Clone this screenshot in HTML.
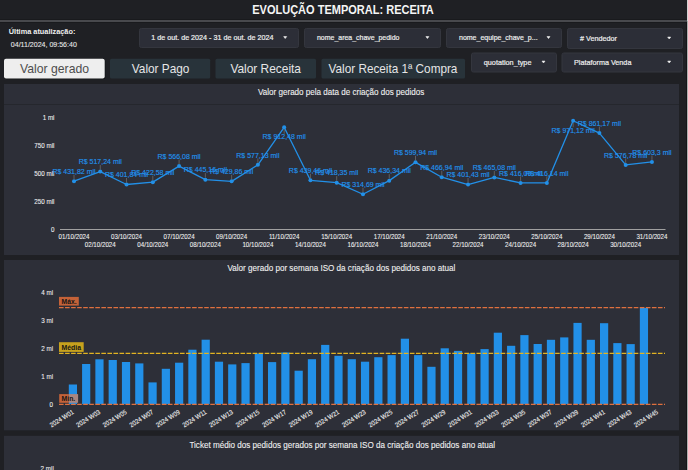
<!DOCTYPE html><html><head><meta charset="utf-8"><style>
html,body{margin:0;padding:0;background:#1f2024;width:688px;height:470px;overflow:hidden;font-family:'Liberation Sans',sans-serif}
</style></head><body>
<svg width="688" height="470" viewBox="0 0 688 470" font-family="'Liberation Sans',sans-serif" style="position:absolute;left:0;top:0">
<rect width="688" height="470" fill="#1f2024"/>
<rect x="0" y="19.2" width="687" height="3.6" fill="#18191c"/>
<rect x="0" y="20" width="687" height="2" fill="#48494d"/>
<rect x="686" y="22" width="1" height="448" fill="#151618"/>
<rect x="687" y="0" width="1" height="21" fill="#d4d4d4"/>
<rect x="687" y="21" width="1" height="449" fill="#b0b0b0"/>
<rect x="139.5" y="28.5" width="159" height="19" rx="1.8" fill="#2c2e37" stroke="#34363e" stroke-width="1"/>
<path d="M283.7,36.6 L286.7,36.6 L285.2,38.5 Z" fill="#f0f0f0" stroke="#f0f0f0" stroke-width="0.6" stroke-linejoin="round"/>
<rect x="304.5" y="28.5" width="136" height="19" rx="1.8" fill="#2c2e37" stroke="#34363e" stroke-width="1"/>
<path d="M425.9,36.6 L428.9,36.6 L427.4,38.5 Z" fill="#f0f0f0" stroke="#f0f0f0" stroke-width="0.6" stroke-linejoin="round"/>
<rect x="446.5" y="28.5" width="115" height="19" rx="1.8" fill="#2c2e37" stroke="#34363e" stroke-width="1"/>
<path d="M547.0,36.6 L550.0,36.6 L548.5,38.5 Z" fill="#f0f0f0" stroke="#f0f0f0" stroke-width="0.6" stroke-linejoin="round"/>
<rect x="567.5" y="28.5" width="115" height="20" rx="1.8" fill="#2c2e37" stroke="#34363e" stroke-width="1"/>
<path d="M667.7,37.1 L670.7,37.1 L669.2,39.0 Z" fill="#f0f0f0" stroke="#f0f0f0" stroke-width="0.6" stroke-linejoin="round"/>
<rect x="471.5" y="53.0" width="85" height="19.0" rx="1.8" fill="#2c2e37" stroke="#34363e" stroke-width="1"/>
<path d="M542.0,61.1 L545.0,61.1 L543.5,63.0 Z" fill="#f0f0f0" stroke="#f0f0f0" stroke-width="0.6" stroke-linejoin="round"/>
<rect x="562.0" y="53.0" width="120.5" height="19.0" rx="1.8" fill="#2c2e37" stroke="#34363e" stroke-width="1"/>
<path d="M667.7,61.1 L670.7,61.1 L669.2,63.0 Z" fill="#f0f0f0" stroke="#f0f0f0" stroke-width="0.6" stroke-linejoin="round"/>
<rect x="4.3" y="59.3" width="101.10000000000001" height="20" rx="2" fill="#131417"/>
<rect x="4" y="58.8" width="100.7" height="19.8" rx="2" fill="#eeeeee"/>
<rect x="110" y="58.8" width="100.19999999999999" height="19.8" rx="1.5" fill="#28333a"/>
<rect x="215.5" y="58.8" width="100.5" height="19.8" rx="1.5" fill="#28333a"/>
<rect x="321.5" y="58.8" width="143.5" height="19.8" rx="1.5" fill="#28333a"/>
<rect x="4" y="84" width="675" height="171" fill="#2d2f38"/>
<rect x="4" y="104" width="675" height="1" fill="#25272d"/>
<rect x="4" y="260" width="675" height="170.3" fill="#2d2f38"/>
<rect x="4" y="435.8" width="675" height="40" fill="#2d2f38"/>
<text x="252.20" y="13.8" font-size="12" font-weight="700" fill="#f5f5f5" textLength="181.60" lengthAdjust="spacingAndGlyphs">EVOLUÇÃO TEMPORAL: RECEITA</text>
<text x="8.80" y="34.0" font-size="7" font-weight="700" fill="#eeeeee" textLength="66.61" lengthAdjust="spacingAndGlyphs">Última atualização:</text>
<text x="10.80" y="47.1" font-size="8" font-weight="400" fill="#e8e8e8" stroke="#e8e8e8" stroke-width="0.1" textLength="66.01" lengthAdjust="spacingAndGlyphs">04/11/2024, 09:56:40</text>
<text x="151.20" y="40.4" font-size="7.6" font-weight="400" fill="#eeeeee" stroke="#eeeeee" stroke-width="0.2" textLength="122.20" lengthAdjust="spacingAndGlyphs">1 de out. de 2024 - 31 de out. de 2024</text>
<text x="317.00" y="40.4" font-size="7.6" font-weight="400" fill="#eeeeee" stroke="#eeeeee" stroke-width="0.2" textLength="82.40" lengthAdjust="spacingAndGlyphs">nome_area_chave_pedido</text>
<text x="459.00" y="40.4" font-size="7.6" font-weight="400" fill="#eeeeee" stroke="#eeeeee" stroke-width="0.2" textLength="78.60" lengthAdjust="spacingAndGlyphs">nome_equipe_chave_p...</text>
<text x="580.00" y="40.5" font-size="7.6" font-weight="400" fill="#eeeeee" stroke="#eeeeee" stroke-width="0.2" textLength="37.00" lengthAdjust="spacingAndGlyphs"># Vendedor</text>
<text x="483.80" y="64.6" font-size="7.6" font-weight="400" fill="#eeeeee" stroke="#eeeeee" stroke-width="0.2" textLength="47.62" lengthAdjust="spacingAndGlyphs">quotation_type</text>
<text x="574.00" y="64.7" font-size="7.6" font-weight="400" fill="#eeeeee" stroke="#eeeeee" stroke-width="0.2" textLength="57.41" lengthAdjust="spacingAndGlyphs">Plataforma Venda</text>
<text x="20.00" y="73.0" font-size="13.5" font-weight="400" fill="#4d4d4d" textLength="69.01" lengthAdjust="spacingAndGlyphs">Valor gerado</text>
<text x="131.80" y="73.0" font-size="13.5" font-weight="400" fill="#e6e6e6" textLength="57.61" lengthAdjust="spacingAndGlyphs">Valor Pago</text>
<text x="230.40" y="72.8" font-size="13.5" font-weight="400" fill="#e6e6e6" textLength="70.61" lengthAdjust="spacingAndGlyphs">Valor Receita</text>
<text x="328.60" y="73.0" font-size="13.5" font-weight="400" fill="#e6e6e6" textLength="128.80" lengthAdjust="spacingAndGlyphs">Valor Receita 1ª Compra</text>
<text x="258.00" y="94.9" font-size="8.8" font-weight="400" fill="#f0f0f0" stroke="#f0f0f0" stroke-width="0.1" textLength="166.20" lengthAdjust="spacingAndGlyphs">Valor gerado pela data de criação dos pedidos</text>
<text x="227.40" y="271.2" font-size="8.8" font-weight="400" fill="#f0f0f0" stroke="#f0f0f0" stroke-width="0.1" textLength="228.00" lengthAdjust="spacingAndGlyphs">Valor gerado por semana ISO da criação dos pedidos ano atual</text>
<text x="189.40" y="447.5" font-size="8.8" font-weight="400" fill="#f0f0f0" stroke="#f0f0f0" stroke-width="0.1" textLength="305.60" lengthAdjust="spacingAndGlyphs">Ticket médio dos pedidos gerados por semana ISO da criação dos pedidos ano atual</text>
<text x="54.5" y="120" text-anchor="end" font-size="6.7" fill="#f0f0f0" stroke="#f0f0f0" stroke-width="0.08" textLength="11.81" lengthAdjust="spacingAndGlyphs">1 mi</text>
<text x="54.5" y="148" text-anchor="end" font-size="6.7" fill="#f0f0f0" stroke="#f0f0f0" stroke-width="0.08" textLength="20.15" lengthAdjust="spacingAndGlyphs">750 mil</text>
<text x="54.5" y="176" text-anchor="end" font-size="6.7" fill="#f0f0f0" stroke="#f0f0f0" stroke-width="0.08" textLength="20.15" lengthAdjust="spacingAndGlyphs">500 mil</text>
<text x="54.5" y="204" text-anchor="end" font-size="6.7" fill="#f0f0f0" stroke="#f0f0f0" stroke-width="0.08" textLength="20.15" lengthAdjust="spacingAndGlyphs">250 mil</text>
<text x="54.5" y="232" text-anchor="end" font-size="6.7" fill="#f0f0f0" stroke="#f0f0f0" stroke-width="0.08" textLength="3.48" lengthAdjust="spacingAndGlyphs">0</text>
<line x1="60" y1="229.5" x2="665.5" y2="229.5" stroke="#a0a0a0" stroke-width="1"/>
<text x="74.00" y="238.7" text-anchor="middle" font-size="6.7" fill="#f0f0f0" stroke="#f0f0f0" stroke-width="0.08" textLength="31.03" lengthAdjust="spacingAndGlyphs">01/10/2024</text>
<text x="100.27" y="246.6" text-anchor="middle" font-size="6.7" fill="#f0f0f0" stroke="#f0f0f0" stroke-width="0.08" textLength="31.03" lengthAdjust="spacingAndGlyphs">02/10/2024</text>
<text x="126.54" y="238.7" text-anchor="middle" font-size="6.7" fill="#f0f0f0" stroke="#f0f0f0" stroke-width="0.08" textLength="31.03" lengthAdjust="spacingAndGlyphs">03/10/2024</text>
<text x="152.81" y="246.6" text-anchor="middle" font-size="6.7" fill="#f0f0f0" stroke="#f0f0f0" stroke-width="0.08" textLength="31.03" lengthAdjust="spacingAndGlyphs">04/10/2024</text>
<text x="179.08" y="238.7" text-anchor="middle" font-size="6.7" fill="#f0f0f0" stroke="#f0f0f0" stroke-width="0.08" textLength="31.03" lengthAdjust="spacingAndGlyphs">07/10/2024</text>
<text x="205.35" y="246.6" text-anchor="middle" font-size="6.7" fill="#f0f0f0" stroke="#f0f0f0" stroke-width="0.08" textLength="31.03" lengthAdjust="spacingAndGlyphs">08/10/2024</text>
<text x="231.62" y="238.7" text-anchor="middle" font-size="6.7" fill="#f0f0f0" stroke="#f0f0f0" stroke-width="0.08" textLength="31.03" lengthAdjust="spacingAndGlyphs">09/10/2024</text>
<text x="257.89" y="246.6" text-anchor="middle" font-size="6.7" fill="#f0f0f0" stroke="#f0f0f0" stroke-width="0.08" textLength="31.03" lengthAdjust="spacingAndGlyphs">10/10/2024</text>
<text x="284.16" y="238.7" text-anchor="middle" font-size="6.7" fill="#f0f0f0" stroke="#f0f0f0" stroke-width="0.08" textLength="30.57" lengthAdjust="spacingAndGlyphs">11/10/2024</text>
<text x="310.43" y="246.6" text-anchor="middle" font-size="6.7" fill="#f0f0f0" stroke="#f0f0f0" stroke-width="0.08" textLength="31.03" lengthAdjust="spacingAndGlyphs">14/10/2024</text>
<text x="336.70" y="238.7" text-anchor="middle" font-size="6.7" fill="#f0f0f0" stroke="#f0f0f0" stroke-width="0.08" textLength="31.03" lengthAdjust="spacingAndGlyphs">15/10/2024</text>
<text x="362.97" y="246.6" text-anchor="middle" font-size="6.7" fill="#f0f0f0" stroke="#f0f0f0" stroke-width="0.08" textLength="31.03" lengthAdjust="spacingAndGlyphs">16/10/2024</text>
<text x="389.24" y="238.7" text-anchor="middle" font-size="6.7" fill="#f0f0f0" stroke="#f0f0f0" stroke-width="0.08" textLength="31.03" lengthAdjust="spacingAndGlyphs">17/10/2024</text>
<text x="415.51" y="246.6" text-anchor="middle" font-size="6.7" fill="#f0f0f0" stroke="#f0f0f0" stroke-width="0.08" textLength="31.03" lengthAdjust="spacingAndGlyphs">18/10/2024</text>
<text x="441.78" y="238.7" text-anchor="middle" font-size="6.7" fill="#f0f0f0" stroke="#f0f0f0" stroke-width="0.08" textLength="31.03" lengthAdjust="spacingAndGlyphs">21/10/2024</text>
<text x="468.05" y="246.6" text-anchor="middle" font-size="6.7" fill="#f0f0f0" stroke="#f0f0f0" stroke-width="0.08" textLength="31.03" lengthAdjust="spacingAndGlyphs">22/10/2024</text>
<text x="494.32" y="238.7" text-anchor="middle" font-size="6.7" fill="#f0f0f0" stroke="#f0f0f0" stroke-width="0.08" textLength="31.03" lengthAdjust="spacingAndGlyphs">23/10/2024</text>
<text x="520.59" y="246.6" text-anchor="middle" font-size="6.7" fill="#f0f0f0" stroke="#f0f0f0" stroke-width="0.08" textLength="31.03" lengthAdjust="spacingAndGlyphs">24/10/2024</text>
<text x="546.86" y="238.7" text-anchor="middle" font-size="6.7" fill="#f0f0f0" stroke="#f0f0f0" stroke-width="0.08" textLength="31.03" lengthAdjust="spacingAndGlyphs">25/10/2024</text>
<text x="573.13" y="246.6" text-anchor="middle" font-size="6.7" fill="#f0f0f0" stroke="#f0f0f0" stroke-width="0.08" textLength="31.03" lengthAdjust="spacingAndGlyphs">28/10/2024</text>
<text x="599.40" y="238.7" text-anchor="middle" font-size="6.7" fill="#f0f0f0" stroke="#f0f0f0" stroke-width="0.08" textLength="31.03" lengthAdjust="spacingAndGlyphs">29/10/2024</text>
<text x="625.67" y="246.6" text-anchor="middle" font-size="6.7" fill="#f0f0f0" stroke="#f0f0f0" stroke-width="0.08" textLength="31.03" lengthAdjust="spacingAndGlyphs">30/10/2024</text>
<text x="651.94" y="238.7" text-anchor="middle" font-size="6.7" fill="#f0f0f0" stroke="#f0f0f0" stroke-width="0.08" textLength="31.03" lengthAdjust="spacingAndGlyphs">31/10/2024</text>
<polyline points="74.00,181.14 100.27,171.57 126.54,184.49 152.81,182.17 179.08,166.10 205.35,179.64 231.62,181.36 257.89,164.86 284.16,127.30 310.43,180.28 336.70,182.64 362.97,194.25 389.24,180.63 415.51,162.31 441.78,177.20 468.05,184.54 494.32,177.41 520.59,182.90 546.86,182.89 573.13,120.73 599.40,133.05 625.67,164.90 651.94,161.93" fill="none" stroke="#2290e8" stroke-width="1.3" stroke-linejoin="round"/>
<circle cx="74.00" cy="181.14" r="2" fill="#2290e8"/>
<circle cx="100.27" cy="171.57" r="2" fill="#2290e8"/>
<circle cx="126.54" cy="184.49" r="2" fill="#2290e8"/>
<circle cx="152.81" cy="182.17" r="2" fill="#2290e8"/>
<circle cx="179.08" cy="166.10" r="2" fill="#2290e8"/>
<circle cx="205.35" cy="179.64" r="2" fill="#2290e8"/>
<circle cx="231.62" cy="181.36" r="2" fill="#2290e8"/>
<circle cx="257.89" cy="164.86" r="2" fill="#2290e8"/>
<circle cx="284.16" cy="127.30" r="2" fill="#2290e8"/>
<circle cx="310.43" cy="180.28" r="2" fill="#2290e8"/>
<circle cx="336.70" cy="182.64" r="2" fill="#2290e8"/>
<circle cx="362.97" cy="194.25" r="2" fill="#2290e8"/>
<circle cx="389.24" cy="180.63" r="2" fill="#2290e8"/>
<circle cx="415.51" cy="162.31" r="2" fill="#2290e8"/>
<circle cx="441.78" cy="177.20" r="2" fill="#2290e8"/>
<circle cx="468.05" cy="184.54" r="2" fill="#2290e8"/>
<circle cx="494.32" cy="177.41" r="2" fill="#2290e8"/>
<circle cx="520.59" cy="182.90" r="2" fill="#2290e8"/>
<circle cx="546.86" cy="182.89" r="2" fill="#2290e8"/>
<circle cx="573.13" cy="120.73" r="2" fill="#2290e8"/>
<circle cx="599.40" cy="133.05" r="2" fill="#2290e8"/>
<circle cx="625.67" cy="164.90" r="2" fill="#2290e8"/>
<circle cx="651.94" cy="161.93" r="2" fill="#2290e8"/>
<line x1="74.00" y1="179.14" x2="74.00" y2="174.64" stroke="#707070" stroke-width="0.75"/>
<text x="74.00" y="173.84" text-anchor="middle" font-size="7.9" fill="#2193ee" stroke="#2193ee" stroke-width="0.15" textLength="43.19" lengthAdjust="spacingAndGlyphs">R$ 431,82 mil</text>
<line x1="100.27" y1="169.57" x2="100.27" y2="165.07" stroke="#707070" stroke-width="0.75"/>
<text x="100.27" y="164.27" text-anchor="middle" font-size="7.9" fill="#2193ee" stroke="#2193ee" stroke-width="0.15" textLength="43.19" lengthAdjust="spacingAndGlyphs">R$ 517,24 mil</text>
<line x1="126.54" y1="182.49" x2="126.54" y2="177.99" stroke="#707070" stroke-width="0.75"/>
<text x="126.54" y="177.19" text-anchor="middle" font-size="7.9" fill="#2193ee" stroke="#2193ee" stroke-width="0.15" textLength="43.19" lengthAdjust="spacingAndGlyphs">R$ 401,84 mil</text>
<line x1="152.81" y1="180.17" x2="152.81" y2="175.67" stroke="#707070" stroke-width="0.75"/>
<text x="152.81" y="174.87" text-anchor="middle" font-size="7.9" fill="#2193ee" stroke="#2193ee" stroke-width="0.15" textLength="43.19" lengthAdjust="spacingAndGlyphs">R$ 422,58 mil</text>
<line x1="179.08" y1="164.10" x2="179.08" y2="159.60" stroke="#707070" stroke-width="0.75"/>
<text x="179.08" y="158.80" text-anchor="middle" font-size="7.9" fill="#2193ee" stroke="#2193ee" stroke-width="0.15" textLength="43.19" lengthAdjust="spacingAndGlyphs">R$ 566,08 mil</text>
<line x1="205.35" y1="177.64" x2="205.35" y2="173.14" stroke="#707070" stroke-width="0.75"/>
<text x="205.35" y="172.34" text-anchor="middle" font-size="7.9" fill="#2193ee" stroke="#2193ee" stroke-width="0.15" textLength="43.19" lengthAdjust="spacingAndGlyphs">R$ 445,16 mil</text>
<line x1="231.62" y1="179.36" x2="231.62" y2="174.86" stroke="#707070" stroke-width="0.75"/>
<text x="231.62" y="174.06" text-anchor="middle" font-size="7.9" fill="#2193ee" stroke="#2193ee" stroke-width="0.15" textLength="43.19" lengthAdjust="spacingAndGlyphs">R$ 429,86 mil</text>
<line x1="257.89" y1="162.86" x2="257.89" y2="158.36" stroke="#707070" stroke-width="0.75"/>
<text x="257.89" y="157.56" text-anchor="middle" font-size="7.9" fill="#2193ee" stroke="#2193ee" stroke-width="0.15" textLength="43.19" lengthAdjust="spacingAndGlyphs">R$ 577,13 mil</text>
<line x1="284.16" y1="129.30" x2="284.16" y2="133.80" stroke="#707070" stroke-width="0.75"/>
<text x="284.16" y="139.30" text-anchor="middle" font-size="7.9" fill="#2193ee" stroke="#2193ee" stroke-width="0.15" textLength="43.19" lengthAdjust="spacingAndGlyphs">R$ 912,48 mil</text>
<line x1="310.43" y1="178.28" x2="310.43" y2="173.78" stroke="#707070" stroke-width="0.75"/>
<text x="310.43" y="172.98" text-anchor="middle" font-size="7.9" fill="#2193ee" stroke="#2193ee" stroke-width="0.15" textLength="43.19" lengthAdjust="spacingAndGlyphs">R$ 439,46 mil</text>
<line x1="336.70" y1="180.64" x2="336.70" y2="176.14" stroke="#707070" stroke-width="0.75"/>
<text x="336.70" y="175.34" text-anchor="middle" font-size="7.9" fill="#2193ee" stroke="#2193ee" stroke-width="0.15" textLength="43.19" lengthAdjust="spacingAndGlyphs">R$ 418,35 mil</text>
<line x1="362.97" y1="192.25" x2="362.97" y2="187.75" stroke="#707070" stroke-width="0.75"/>
<text x="362.97" y="186.95" text-anchor="middle" font-size="7.9" fill="#2193ee" stroke="#2193ee" stroke-width="0.15" textLength="43.19" lengthAdjust="spacingAndGlyphs">R$ 314,69 mil</text>
<line x1="389.24" y1="178.63" x2="389.24" y2="174.13" stroke="#707070" stroke-width="0.75"/>
<text x="389.24" y="173.33" text-anchor="middle" font-size="7.9" fill="#2193ee" stroke="#2193ee" stroke-width="0.15" textLength="43.19" lengthAdjust="spacingAndGlyphs">R$ 436,34 mil</text>
<line x1="415.51" y1="160.31" x2="415.51" y2="155.81" stroke="#707070" stroke-width="0.75"/>
<text x="415.51" y="155.01" text-anchor="middle" font-size="7.9" fill="#2193ee" stroke="#2193ee" stroke-width="0.15" textLength="43.19" lengthAdjust="spacingAndGlyphs">R$ 599,94 mil</text>
<line x1="441.78" y1="175.20" x2="441.78" y2="170.70" stroke="#707070" stroke-width="0.75"/>
<text x="441.78" y="169.90" text-anchor="middle" font-size="7.9" fill="#2193ee" stroke="#2193ee" stroke-width="0.15" textLength="43.19" lengthAdjust="spacingAndGlyphs">R$ 466,94 mil</text>
<line x1="468.05" y1="182.54" x2="468.05" y2="178.04" stroke="#707070" stroke-width="0.75"/>
<text x="468.05" y="177.24" text-anchor="middle" font-size="7.9" fill="#2193ee" stroke="#2193ee" stroke-width="0.15" textLength="43.19" lengthAdjust="spacingAndGlyphs">R$ 401,43 mil</text>
<line x1="494.32" y1="175.41" x2="494.32" y2="170.91" stroke="#707070" stroke-width="0.75"/>
<text x="494.32" y="170.11" text-anchor="middle" font-size="7.9" fill="#2193ee" stroke="#2193ee" stroke-width="0.15" textLength="43.19" lengthAdjust="spacingAndGlyphs">R$ 465,08 mil</text>
<line x1="520.59" y1="180.90" x2="520.59" y2="176.40" stroke="#707070" stroke-width="0.75"/>
<text x="520.59" y="175.60" text-anchor="middle" font-size="7.9" fill="#2193ee" stroke="#2193ee" stroke-width="0.15" textLength="43.19" lengthAdjust="spacingAndGlyphs">R$ 416,09 mil</text>
<line x1="546.86" y1="180.89" x2="546.86" y2="176.39" stroke="#707070" stroke-width="0.75"/>
<text x="546.86" y="175.59" text-anchor="middle" font-size="7.9" fill="#2193ee" stroke="#2193ee" stroke-width="0.15" textLength="43.19" lengthAdjust="spacingAndGlyphs">R$ 416,14 mil</text>
<line x1="573.13" y1="122.73" x2="573.13" y2="127.23" stroke="#707070" stroke-width="0.75"/>
<text x="573.13" y="132.73" text-anchor="middle" font-size="7.9" fill="#2193ee" stroke="#2193ee" stroke-width="0.15" textLength="43.19" lengthAdjust="spacingAndGlyphs">R$ 971,12 mil</text>
<line x1="599.40" y1="131.05" x2="599.40" y2="126.55" stroke="#707070" stroke-width="0.75"/>
<text x="599.40" y="125.75" text-anchor="middle" font-size="7.9" fill="#2193ee" stroke="#2193ee" stroke-width="0.15" textLength="43.19" lengthAdjust="spacingAndGlyphs">R$ 861,17 mil</text>
<line x1="625.67" y1="162.90" x2="625.67" y2="158.40" stroke="#707070" stroke-width="0.75"/>
<text x="625.67" y="157.60" text-anchor="middle" font-size="7.9" fill="#2193ee" stroke="#2193ee" stroke-width="0.15" textLength="43.19" lengthAdjust="spacingAndGlyphs">R$ 576,78 mil</text>
<line x1="651.94" y1="159.93" x2="651.94" y2="155.43" stroke="#707070" stroke-width="0.75"/>
<text x="651.94" y="154.63" text-anchor="middle" font-size="7.9" fill="#2193ee" stroke="#2193ee" stroke-width="0.15" textLength="39.30" lengthAdjust="spacingAndGlyphs">R$ 603,3 mil</text>
<text x="53.1" y="295.20" text-anchor="end" font-size="6.7" fill="#f0f0f0" stroke="#f0f0f0" stroke-width="0.08" textLength="11.81" lengthAdjust="spacingAndGlyphs">4 mi</text>
<text x="53.1" y="323.15" text-anchor="end" font-size="6.7" fill="#f0f0f0" stroke="#f0f0f0" stroke-width="0.08" textLength="11.81" lengthAdjust="spacingAndGlyphs">3 mi</text>
<text x="53.1" y="351.10" text-anchor="end" font-size="6.7" fill="#f0f0f0" stroke="#f0f0f0" stroke-width="0.08" textLength="11.81" lengthAdjust="spacingAndGlyphs">2 mi</text>
<text x="53.1" y="379.05" text-anchor="end" font-size="6.7" fill="#f0f0f0" stroke="#f0f0f0" stroke-width="0.08" textLength="11.81" lengthAdjust="spacingAndGlyphs">1 mi</text>
<text x="53.1" y="407.00" text-anchor="end" font-size="6.7" fill="#f0f0f0" stroke="#f0f0f0" stroke-width="0.08" textLength="3.48" lengthAdjust="spacingAndGlyphs">0</text>
<rect x="68.80" y="384.5" width="8.2" height="19.70" fill="#2290e8"/>
<rect x="82.08" y="364" width="8.2" height="40.20" fill="#2290e8"/>
<rect x="95.36" y="359.3" width="8.2" height="44.90" fill="#2290e8"/>
<rect x="108.64" y="360" width="8.2" height="44.20" fill="#2290e8"/>
<rect x="121.92" y="362" width="8.2" height="42.20" fill="#2290e8"/>
<rect x="135.20" y="363.4" width="8.2" height="40.80" fill="#2290e8"/>
<rect x="148.48" y="382.4" width="8.2" height="21.80" fill="#2290e8"/>
<rect x="161.76" y="368.8" width="8.2" height="35.40" fill="#2290e8"/>
<rect x="175.04" y="362.7" width="8.2" height="41.50" fill="#2290e8"/>
<rect x="188.32" y="349.7" width="8.2" height="54.50" fill="#2290e8"/>
<rect x="201.60" y="339.7" width="8.2" height="64.50" fill="#2290e8"/>
<rect x="214.88" y="361.7" width="8.2" height="42.50" fill="#2290e8"/>
<rect x="228.16" y="364.4" width="8.2" height="39.80" fill="#2290e8"/>
<rect x="241.44" y="363.1" width="8.2" height="41.10" fill="#2290e8"/>
<rect x="254.72" y="353.5" width="8.2" height="50.70" fill="#2290e8"/>
<rect x="268.00" y="362.1" width="8.2" height="42.10" fill="#2290e8"/>
<rect x="281.28" y="352.5" width="8.2" height="51.70" fill="#2290e8"/>
<rect x="294.56" y="370.7" width="8.2" height="33.50" fill="#2290e8"/>
<rect x="307.84" y="359.2" width="8.2" height="45.00" fill="#2290e8"/>
<rect x="321.12" y="344.9" width="8.2" height="59.30" fill="#2290e8"/>
<rect x="334.40" y="355.8" width="8.2" height="48.40" fill="#2290e8"/>
<rect x="347.68" y="359.2" width="8.2" height="45.00" fill="#2290e8"/>
<rect x="360.96" y="361.7" width="8.2" height="42.50" fill="#2290e8"/>
<rect x="374.24" y="357.2" width="8.2" height="47.00" fill="#2290e8"/>
<rect x="387.52" y="355.1" width="8.2" height="49.10" fill="#2290e8"/>
<rect x="400.80" y="338.7" width="8.2" height="65.50" fill="#2290e8"/>
<rect x="414.08" y="355.1" width="8.2" height="49.10" fill="#2290e8"/>
<rect x="427.36" y="366.8" width="8.2" height="37.40" fill="#2290e8"/>
<rect x="440.64" y="348.3" width="8.2" height="55.90" fill="#2290e8"/>
<rect x="453.92" y="350.9" width="8.2" height="53.30" fill="#2290e8"/>
<rect x="467.20" y="353.3" width="8.2" height="50.90" fill="#2290e8"/>
<rect x="480.48" y="349.1" width="8.2" height="55.10" fill="#2290e8"/>
<rect x="493.76" y="332.7" width="8.2" height="71.50" fill="#2290e8"/>
<rect x="507.04" y="345.8" width="8.2" height="58.40" fill="#2290e8"/>
<rect x="520.32" y="335.1" width="8.2" height="69.10" fill="#2290e8"/>
<rect x="533.60" y="344" width="8.2" height="60.20" fill="#2290e8"/>
<rect x="546.88" y="339.8" width="8.2" height="64.40" fill="#2290e8"/>
<rect x="560.16" y="337.4" width="8.2" height="66.80" fill="#2290e8"/>
<rect x="573.44" y="322.9" width="8.2" height="81.30" fill="#2290e8"/>
<rect x="586.72" y="339.8" width="8.2" height="64.40" fill="#2290e8"/>
<rect x="600.00" y="323.2" width="8.2" height="81.00" fill="#2290e8"/>
<rect x="613.28" y="343.1" width="8.2" height="61.10" fill="#2290e8"/>
<rect x="626.56" y="344.1" width="8.2" height="60.10" fill="#2290e8"/>
<rect x="639.84" y="307.9" width="8.2" height="96.30" fill="#2290e8"/>
<line x1="59" y1="307.6" x2="665" y2="307.6" stroke="#e0703e" stroke-width="1.2" stroke-dasharray="4.6,1.45"/>
<line x1="59" y1="353.3" x2="665" y2="353.3" stroke="#e2b322" stroke-width="1.2" stroke-dasharray="4.6,1.45"/>
<line x1="59" y1="404.4" x2="665" y2="404.4" stroke="#e0703e" stroke-width="1.2" stroke-dasharray="4.6,1.45"/>
<rect x="59" y="296.9" width="19.8" height="8.7" fill="#c46238"/>
<text x="61.6" y="304.3" font-size="7" font-weight="700" fill="#151515" textLength="15" lengthAdjust="spacingAndGlyphs">Máx.</text>
<rect x="59" y="342.2" width="24.7" height="9.7" fill="#c6a11d"/>
<text x="61.6" y="349.7" font-size="7" font-weight="700" fill="#151515" textLength="19.4" lengthAdjust="spacingAndGlyphs">Média</text>
<rect x="59.2" y="394.1" width="9.6" height="8.7" fill="#c46238"/><rect x="68.8" y="394.1" width="9.3" height="8.7" fill="#a98680"/>
<text x="61.6" y="400.8" font-size="7" font-weight="700" fill="#151515" textLength="13.6" lengthAdjust="spacingAndGlyphs">Mín.</text>
<text x="0" y="0" transform="translate(74.20,413.3) rotate(-32)" text-anchor="end" font-size="6.6" fill="#f0f0f0" stroke="#f0f0f0" stroke-width="0.1" textLength="26.8" lengthAdjust="spacingAndGlyphs">2024 W01</text>
<text x="0" y="0" transform="translate(100.76,413.3) rotate(-32)" text-anchor="end" font-size="6.6" fill="#f0f0f0" stroke="#f0f0f0" stroke-width="0.1" textLength="26.8" lengthAdjust="spacingAndGlyphs">2024 W03</text>
<text x="0" y="0" transform="translate(127.32,413.3) rotate(-32)" text-anchor="end" font-size="6.6" fill="#f0f0f0" stroke="#f0f0f0" stroke-width="0.1" textLength="26.8" lengthAdjust="spacingAndGlyphs">2024 W05</text>
<text x="0" y="0" transform="translate(153.88,413.3) rotate(-32)" text-anchor="end" font-size="6.6" fill="#f0f0f0" stroke="#f0f0f0" stroke-width="0.1" textLength="26.8" lengthAdjust="spacingAndGlyphs">2024 W07</text>
<text x="0" y="0" transform="translate(180.44,413.3) rotate(-32)" text-anchor="end" font-size="6.6" fill="#f0f0f0" stroke="#f0f0f0" stroke-width="0.1" textLength="26.8" lengthAdjust="spacingAndGlyphs">2024 W09</text>
<text x="0" y="0" transform="translate(207.00,413.3) rotate(-32)" text-anchor="end" font-size="6.6" fill="#f0f0f0" stroke="#f0f0f0" stroke-width="0.1" textLength="26.8" lengthAdjust="spacingAndGlyphs">2024 W11</text>
<text x="0" y="0" transform="translate(233.56,413.3) rotate(-32)" text-anchor="end" font-size="6.6" fill="#f0f0f0" stroke="#f0f0f0" stroke-width="0.1" textLength="26.8" lengthAdjust="spacingAndGlyphs">2024 W13</text>
<text x="0" y="0" transform="translate(260.12,413.3) rotate(-32)" text-anchor="end" font-size="6.6" fill="#f0f0f0" stroke="#f0f0f0" stroke-width="0.1" textLength="26.8" lengthAdjust="spacingAndGlyphs">2024 W15</text>
<text x="0" y="0" transform="translate(286.68,413.3) rotate(-32)" text-anchor="end" font-size="6.6" fill="#f0f0f0" stroke="#f0f0f0" stroke-width="0.1" textLength="26.8" lengthAdjust="spacingAndGlyphs">2024 W17</text>
<text x="0" y="0" transform="translate(313.24,413.3) rotate(-32)" text-anchor="end" font-size="6.6" fill="#f0f0f0" stroke="#f0f0f0" stroke-width="0.1" textLength="26.8" lengthAdjust="spacingAndGlyphs">2024 W19</text>
<text x="0" y="0" transform="translate(339.80,413.3) rotate(-32)" text-anchor="end" font-size="6.6" fill="#f0f0f0" stroke="#f0f0f0" stroke-width="0.1" textLength="26.8" lengthAdjust="spacingAndGlyphs">2024 W21</text>
<text x="0" y="0" transform="translate(366.36,413.3) rotate(-32)" text-anchor="end" font-size="6.6" fill="#f0f0f0" stroke="#f0f0f0" stroke-width="0.1" textLength="26.8" lengthAdjust="spacingAndGlyphs">2024 W23</text>
<text x="0" y="0" transform="translate(392.92,413.3) rotate(-32)" text-anchor="end" font-size="6.6" fill="#f0f0f0" stroke="#f0f0f0" stroke-width="0.1" textLength="26.8" lengthAdjust="spacingAndGlyphs">2024 W25</text>
<text x="0" y="0" transform="translate(419.48,413.3) rotate(-32)" text-anchor="end" font-size="6.6" fill="#f0f0f0" stroke="#f0f0f0" stroke-width="0.1" textLength="26.8" lengthAdjust="spacingAndGlyphs">2024 W27</text>
<text x="0" y="0" transform="translate(446.04,413.3) rotate(-32)" text-anchor="end" font-size="6.6" fill="#f0f0f0" stroke="#f0f0f0" stroke-width="0.1" textLength="26.8" lengthAdjust="spacingAndGlyphs">2024 W29</text>
<text x="0" y="0" transform="translate(472.60,413.3) rotate(-32)" text-anchor="end" font-size="6.6" fill="#f0f0f0" stroke="#f0f0f0" stroke-width="0.1" textLength="26.8" lengthAdjust="spacingAndGlyphs">2024 W31</text>
<text x="0" y="0" transform="translate(499.16,413.3) rotate(-32)" text-anchor="end" font-size="6.6" fill="#f0f0f0" stroke="#f0f0f0" stroke-width="0.1" textLength="26.8" lengthAdjust="spacingAndGlyphs">2024 W33</text>
<text x="0" y="0" transform="translate(525.72,413.3) rotate(-32)" text-anchor="end" font-size="6.6" fill="#f0f0f0" stroke="#f0f0f0" stroke-width="0.1" textLength="26.8" lengthAdjust="spacingAndGlyphs">2024 W35</text>
<text x="0" y="0" transform="translate(552.28,413.3) rotate(-32)" text-anchor="end" font-size="6.6" fill="#f0f0f0" stroke="#f0f0f0" stroke-width="0.1" textLength="26.8" lengthAdjust="spacingAndGlyphs">2024 W37</text>
<text x="0" y="0" transform="translate(578.84,413.3) rotate(-32)" text-anchor="end" font-size="6.6" fill="#f0f0f0" stroke="#f0f0f0" stroke-width="0.1" textLength="26.8" lengthAdjust="spacingAndGlyphs">2024 W39</text>
<text x="0" y="0" transform="translate(605.40,413.3) rotate(-32)" text-anchor="end" font-size="6.6" fill="#f0f0f0" stroke="#f0f0f0" stroke-width="0.1" textLength="26.8" lengthAdjust="spacingAndGlyphs">2024 W41</text>
<text x="0" y="0" transform="translate(631.96,413.3) rotate(-32)" text-anchor="end" font-size="6.6" fill="#f0f0f0" stroke="#f0f0f0" stroke-width="0.1" textLength="26.8" lengthAdjust="spacingAndGlyphs">2024 W43</text>
<text x="0" y="0" transform="translate(658.52,413.3) rotate(-32)" text-anchor="end" font-size="6.6" fill="#f0f0f0" stroke="#f0f0f0" stroke-width="0.1" textLength="26.8" lengthAdjust="spacingAndGlyphs">2024 W45</text>
<text x="53.8" y="471" text-anchor="end" font-size="6.7" fill="#f0f0f0" stroke="#f0f0f0" stroke-width="0.08" textLength="13.20" lengthAdjust="spacingAndGlyphs">2 mil</text>
</svg>
</body></html>
